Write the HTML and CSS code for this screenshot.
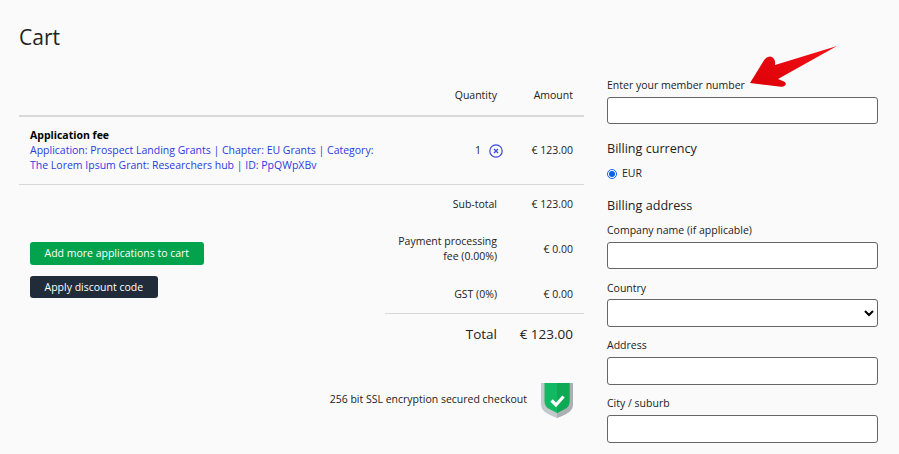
FILE: index.html
```html
<!DOCTYPE html>
<html lang="en">
<head>
<meta charset="utf-8">
<title>Cart</title>
<link rel="stylesheet" href="styles.css">
</head>
<body>
<div class="page">
  <main class="cart">
    <h1 class="title">Cart</h1>
    <div class="head-row">
      <span class="col-qty">Quantity</span>
      <span class="col-amt">Amount</span>
    </div>
    <div class="item-row">
      <div class="item-info">
        <strong class="item-name">Application fee</strong>
        <a class="item-link" href="#">Application: Prospect Landing Grants | Chapter: EU Grants | Category: The Lorem Ipsum Grant: Researchers hub | ID: PpQWpXBv</a>
      </div>
      <div class="qty-cell">
        <span>1</span>
        <svg class="remove" width="14" height="14" viewBox="0 0 14 14"><circle cx="7" cy="7" r="6.2" fill="none" stroke="#3b46e0" stroke-width="1.2"/><path d="M5 5l4 4M9 5l-4 4" stroke="#3b46e0" stroke-width="1.200" fill="none"/></svg>
      </div>
      <span class="col-amt">€ 123.00</span>
    </div>
    <div class="summary">
      <div class="actions">
        <button class="btn btn-green">Add more applications to cart</button>
        <button class="btn btn-dark">Apply discount code</button>
      </div>
      <div class="totals">
        <div class="t-row t-sub"><span class="col-lbl">Sub-total</span><span class="col-amt">€ 123.00</span></div>
        <div class="t-row t-fee"><span class="col-lbl">Payment processing<br>fee (0.00%)</span><span class="col-amt">€ 0.00</span></div>
        <div class="t-row t-gst"><span class="col-lbl">GST (0%)</span><span class="col-amt">€ 0.00</span></div>
        <div class="t-row t-total"><span class="col-lbl">Total</span><span class="col-amt">€ 123.00</span></div>
      </div>
    </div>
    <div class="secure">
      <span class="secure-text">256 bit SSL encryption secured checkout</span>
      <svg width="32" height="36" viewBox="0 0 32 36">
        <path d="M0 1h32v20c0 4-1 7-4 9-4 3-8 4-12 6-4-2-8-3-12-6-3-2-4-5-4-9z" fill="#c3c9cb"/>
        <path d="M16 1h16v20c0 4-1 7-4 9-4 3-8 4-12 6z" fill="#aab1b4"/>
        <path d="M3.500 1h25v18c0 3-1 5-3 7-3 2-6.500 3-9.500 5-3-2-6.500-3-9.500-5-2-2-3-4-3-7z" fill="#13b862"/>
        <path d="M16 1h12.500v18c0 3-1 5-3 7-3 2-6.500 3-9.500 5z" fill="#0ea954"/>
        <path d="M10.500 18.500l4.500 4.500 7.500-8.500" fill="none" stroke="#fff" stroke-width="3.200"/>
      </svg>
    </div>
  </main>
  <aside class="billing">
    <label class="field-label">Enter your member number</label>
    <input class="input" type="text">
    <h2 class="section">Billing currency</h2>
    <label class="radio-row"><input class="radio" type="radio" name="cur" checked><span>EUR</span></label>
    <h2 class="section section-address">Billing address</h2>
    <label class="field-label">Company name (if applicable)</label>
    <input class="input" type="text">
    <label class="field-label gap gap-country">Country</label>
    <select class="input tall"><option></option></select>
    <label class="field-label gap">Address</label>
    <input class="input tall" type="text">
    <label class="field-label gap">City / suburb</label>
    <input class="input tall" type="text">
  </aside>
</div>
<svg class="arrow" width="90" height="48" viewBox="0 0 90 48">
  <defs><linearGradient id="ag" x1="0" y1="1" x2="1" y2="0"><stop offset="0" stop-color="#dc0006"/><stop offset="1" stop-color="#f4121a"/></linearGradient></defs>
  <path d="M0 38 L14.500 14.500 Q18 10.500 22 12 Q26 15 25 20 L87 1 L28 34 L34 36.500 Q37 38 35 40.500 Q33 42.500 29 41.500 Z" fill="url(#ag)"/>
</svg>
</body>
</html>
```
FILE: styles.css
```css
* { box-sizing: border-box; }
html, body { margin: 0; height: 454px; overflow: hidden; }
body {
  background: #fafafa;
  color: #222;
  font-family: "Open Sans", sans-serif;
  font-size: 10.500px;
  line-height: 15px;
  position: relative;
}
.page { display: flex; gap: 23px; padding-left: 19px; }
.cart { width: 565px; flex: none; }
.billing { width: 271px; flex: none; padding-top: 78px; display: flex; flex-direction: column; }
.title { margin: 0; padding-top: 22px; font-size: 21px; line-height: 30px; font-weight: 400; color: #222; }
.head-row { display: flex; justify-content: flex-end; height: 65px; padding-top: 36px; border-bottom: 2px solid #d8d8d8; }
.col-amt { width: 87px; padding-right: 11px; text-align: right; flex: none; }
.item-row { display: flex; align-items: center; height: 68px; border-bottom: 1px solid #d8d8d8; padding-left: 11px; padding-bottom: 1px; }
.item-info { width: 358px; display: flex; flex-direction: column; }
.item-name { font-weight: 700; color: #000; }
.item-link { color: #2b3ae0; text-decoration: none; }
.qty-cell { flex: 1; display: flex; align-items: center; justify-content: flex-end; gap: 8px; margin-right: -6px; padding-top: 1px; }
.remove { flex: none; margin-top: 1px; }
.summary { display: flex; justify-content: space-between; }
.actions { padding: 57px 0 0 11px; display: flex; flex-direction: column; align-items: flex-start; gap: 11px; }
.btn { border: 0; border-radius: 3px; color: #fff; font: 500 10.500px/15px "Open Sans", sans-serif; padding: 0 14.500px; height: 23px; }
.btn-green { background: #03a24c; }
.btn-dark { background: #212c3a; height: 22px; }
.totals { width: 199px; display: flex; flex-direction: column; }
.t-row { display: flex; align-items: center; justify-content: flex-end; }
.col-lbl { text-align: right; }
.t-sub { height: 38px; }
.t-fee { height: 52px; }
.t-gst { height: 39px; border-bottom: 1px solid #d8d8d8; }
.t-total { height: 40px; font-size: 13.500px; font-weight: 500; }
.secure { display: flex; align-items: center; justify-content: flex-end; gap: 14px; margin-top: 28px; padding-right: 11px; }
.secure-text { padding-bottom: 2px; }
.field-label { display: block; height: 15px; margin-bottom: 4px; }
.gap { margin-top: 11px; }
.gap-country { margin-top: 12px; margin-bottom: 3px; }
.input { display: block; width: 271px; height: 27px; background: #fff; border: 1px solid #666; border-radius: 3px; padding: 0 8px; margin: 0; font: inherit; }
.tall { height: 28px; color: #000; }
.section { margin: 15px 0 0; font-size: 12.600px; line-height: 20px; font-weight: 400; color: #222; }
.radio-row { display: flex; align-items: center; gap: 5px; height: 15px; margin-top: 7px; }
.radio { width: 10px; height: 10px; margin: 0; accent-color: #0a60e8; }
.section-address { margin-top: 15px; margin-bottom: 7px; }
.arrow { position: absolute; left: 750px; top: 45px; }
```
